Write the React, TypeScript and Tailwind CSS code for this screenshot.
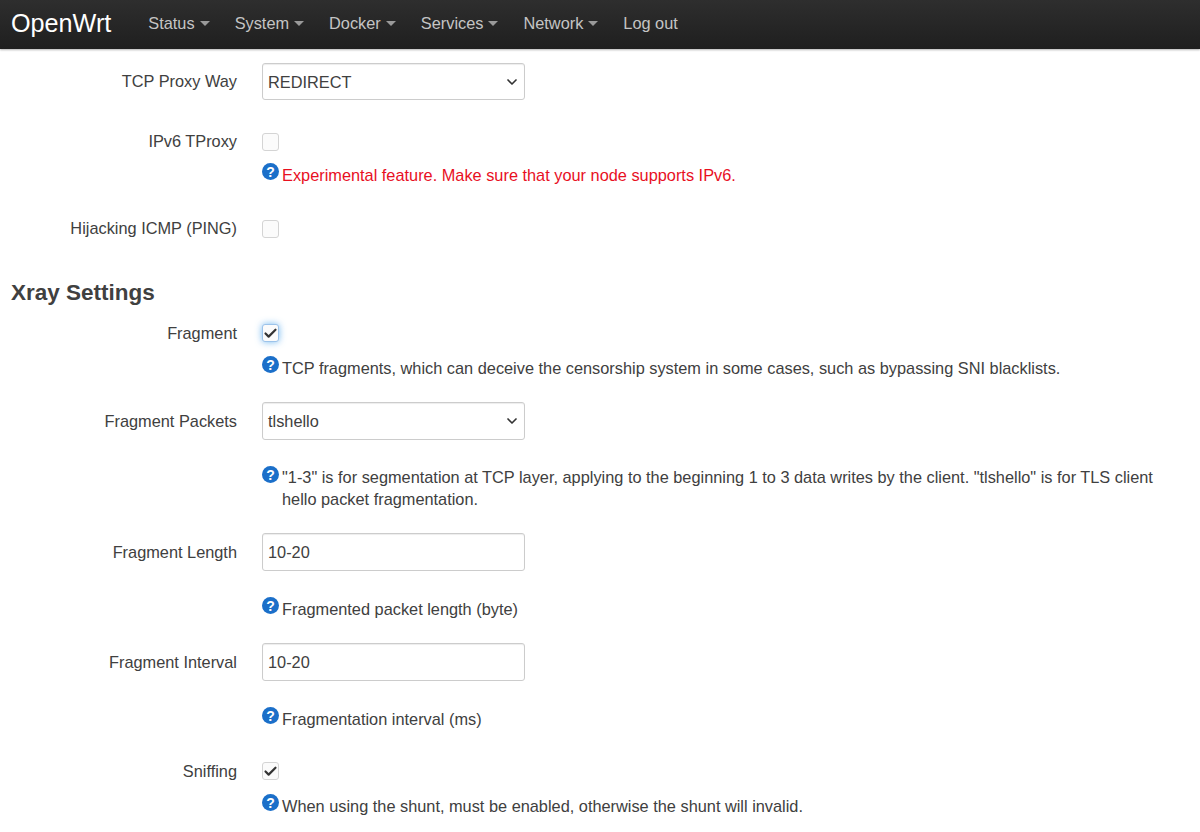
import React from 'react';
import { ChevronDown, Check } from 'lucide-react';

const NAV_ITEMS = ['Status', 'System', 'Docker', 'Services', 'Network'];

function Help({ children, className = 'leading-[25px]' }: { children: React.ReactNode; className?: string }) {
  return (
    <div className={`flex items-start gap-[3px] ${className}`}>
      <span className="flex h-[17px] w-[17px] shrink-0 items-center justify-center rounded-full bg-[#1b6fc9] text-[14px] font-bold leading-none text-white">
        ?
      </span>
      <p className="max-w-[880px]">{children}</p>
    </div>
  );
}

function Row({ label, className = '', children }: { label: string; className?: string; children: React.ReactNode }) {
  return (
    <div className={`flex items-start ${className}`}>
      <div className="w-[237px] shrink-0 text-right">{label}</div>
      <div className="ml-[25px] min-w-0 flex-1">{children}</div>
    </div>
  );
}

function Field({ children, className = 'h-[38px]' }: { children: React.ReactNode; className?: string }) {
  return (
    <div className={`flex w-[263px] items-center justify-between rounded-[3px] border border-[#ccc] bg-white pl-[5px] pr-[4px] shadow-[inset_0_1px_1px_rgba(0,0,0,0.075)] ${className}`}>
      {children}
    </div>
  );
}

function Select({ value, className }: { value: string; className?: string }) {
  return (
    <Field className={className}>
      <span>{value}</span>
      <ChevronDown size={16} strokeWidth={2.5} className="text-[#333]" />
    </Field>
  );
}

function Checkbox({ checked, focused }: { checked?: boolean; focused?: boolean }) {
  return (
    <span
      className={`mb-[1px] flex h-[18px] w-[17px] items-center justify-center rounded-[3px] border bg-[#fbfbfb] ${
        focused ? 'border-[#9cc3ea] shadow-[0_0_7px_rgba(82,168,236,0.8)]' : 'border-[#d4d4d4]'
      }`}
    >
      {checked && <Check size={15} strokeWidth={3.5} className="text-[#333]" />}
    </span>
  );
}

export default function App() {
  return (
    <div className="h-[832px] overflow-hidden bg-white font-['Liberation_Sans',Arial,sans-serif] text-[16.33px] text-[#404040]">
      <header className="flex h-[49px] items-center bg-gradient-to-b from-[#2e2e2e] to-[#1f1f1f] pb-[2px] pl-[11px] shadow-[0_1px_2px_rgba(0,0,0,0.3)]">
        <span className="mr-[37px] text-[25.2px] text-white">OpenWrt</span>
        <nav className="flex items-center gap-[25px] text-[#c4c4c4]">
          {NAV_ITEMS.map((item) => (
            <span key={item} className="flex items-center gap-[5px]">
              {item}
              <span className="h-0 w-0 border-x-[5px] border-t-[5px] border-x-transparent border-t-[#9a9a9a]" />
            </span>
          ))}
          <span>Log out</span>
        </nav>
      </header>

      <main>
        <Row label="TCP Proxy Way" className="mt-[14px] leading-[36px]">
          <Select value="REDIRECT" className="h-[37px]" />
        </Row>

        <Row label="IPv6 TProxy" className="mt-[33px] leading-[17px]">
          <Checkbox />
          <Help className="mt-[12px] leading-[25px] text-[#e8101f]">Experimental feature. Make sure that your node supports IPv6.</Help>
        </Row>

        <Row label="Hijacking ICMP (PING)" className="mt-[32px] leading-[17px]">
          <Checkbox />
        </Row>

        <h2 className="mb-[16px] ml-[11px] mt-[39px] text-[22.5px] font-bold leading-[30px]">Xray Settings</h2>

        <Row label="Fragment" className="leading-[19px]">
          <Checkbox checked focused />
          <Help className="mt-[14px] leading-[25px]">
            TCP fragments, which can deceive the censorship system in some cases, such as bypassing SNI blacklists.
          </Help>
        </Row>

        <Row label="Fragment Packets" className="mt-[21px] leading-[38px]">
          <Select value="tlshello" />
          <Help className="mt-[26px] leading-[22px]">
            "1-3" is for segmentation at TCP layer, applying to the beginning 1 to 3 data writes by the client. "tlshello" is for TLS client hello packet fragmentation.
          </Help>
        </Row>

        <Row label="Fragment Length" className="mt-[23px] leading-[38px]">
          <Field>10-20</Field>
          <Help className="mt-[26px] leading-[25px]">Fragmented packet length (byte)</Help>
        </Row>

        <Row label="Fragment Interval" className="mt-[21px] leading-[38px]">
          <Field>10-20</Field>
          <Help className="mt-[26px] leading-[25px]">Fragmentation interval (ms)</Help>
        </Row>

        <Row label="Sniffing" className="mt-[30px] leading-[19px]">
          <Checkbox checked />
          <Help className="mt-[14px] leading-[25px]">When using the shunt, must be enabled, otherwise the shunt will invalid.</Help>
        </Row>
      </main>
    </div>
  );
}
